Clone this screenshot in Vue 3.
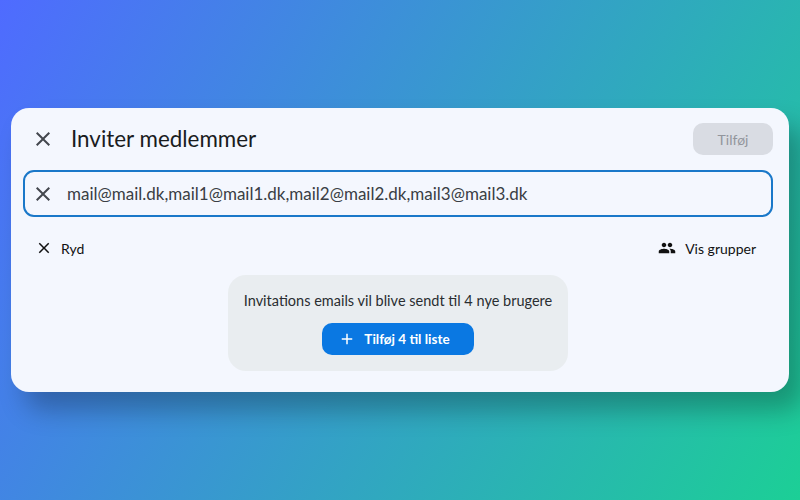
<template>
  <div class="page">
    <div class="dialog">
      <!-- header -->
      <div class="header">
        <button class="icon-btn">
          <svg width="24" height="24" viewBox="0 0 24 24"><path :d="closePath" fill="#43474e" /></svg>
        </button>
        <h1 class="title">Inviter medlemmer</h1>
        <button class="save" disabled>Tilføj</button>
      </div>

      <!-- input -->
      <div class="field">
        <svg width="24" height="24" viewBox="0 0 24 24"><path :d="closePath" fill="#43474e" /></svg>
        <span class="field-text">{{ emails }}</span>
      </div>

      <!-- actions -->
      <div class="actions">
        <button class="text-btn">
          <svg width="18" height="18" viewBox="0 0 24 24"><path :d="closePath" fill="#111" /></svg>
          <span>Ryd</span>
        </button>
        <button class="text-btn groups">
          <svg width="18" height="18" viewBox="0 0 24 24"><path :d="groupPath" fill="#111" /></svg>
          <span>Vis grupper</span>
        </button>
      </div>

      <!-- notice -->
      <div class="notice">
        <p>Invitations emails vil blive sendt til 4 nye brugere</p>
        <button class="add">
          <svg width="18" height="18" viewBox="0 0 24 24"><path d="M19 13h-6v6h-2v-6H5v-2h6V5h2v6h6v2z" fill="#fff" /></svg>
          <span>Tilføj 4 til liste</span>
        </button>
      </div>
    </div>
  </div>
</template>

<script setup>
const emails = 'mail@mail.dk,mail1@mail1.dk,mail2@mail2.dk,mail3@mail3.dk'
const closePath = 'M19 6.41 17.59 5 12 10.59 6.41 5 5 6.41 10.59 12 5 17.59 6.41 19 12 13.41 17.59 19 19 17.59 13.41 12z'
const groupPath = 'M16 11c1.66 0 2.99-1.34 2.99-3S17.66 5 16 5s-3 1.34-3 3 1.34 3 3 3zm-8 0c1.66 0 2.99-1.34 2.99-3S9.66 5 8 5 5 6.34 5 8s1.34 3 3 3zm0 2c-2.33 0-7 1.17-7 3.5V19h14v-2.5c0-2.33-4.67-3.5-7-3.5zm8 0c-.29 0-.62.02-.97.05 1.16.84 1.97 1.97 1.97 3.45V19h6v-2.5c0-2.33-4.67-3.5-7-3.5z'
</script>

<style>
html, body {
  margin: 0;
}
</style>

<style scoped>
.page {
  width: 800px;
  height: 500px;
  box-sizing: border-box;
  padding: 108px 11px 0;
  overflow: hidden;
  background: linear-gradient(120deg, #4f6bff 0%, #1ccf96 100%);
  font-family: "Lato", "Noto Sans", sans-serif;
}

.dialog {
  height: 284px;
  box-sizing: border-box;
  padding: 15px 16px 0 12px;
  background: #f4f7fe;
  border-radius: 18px;
  box-shadow: 14px 18px 26px rgba(0, 0, 0, 0.26);
}

button {
  font-family: inherit;
  border: none;
  background: none;
  padding: 0;
}

.header {
  display: flex;
  align-items: center;
  height: 32px;
}

.icon-btn {
  display: flex;
  width: 24px;
  height: 24px;
  margin-left: 8px;
}

.title {
  flex: 1;
  margin: 0 0 2px 16px;
  font-size: 22.4px;
  font-weight: 400;
  color: #1a1c1e;
}

.save {
  width: 80px;
  height: 32px;
  border-radius: 10px;
  background: #d9dce3;
  color: #92959c;
  font-size: 14px;
}

.field {
  display: flex;
  align-items: center;
  gap: 12px;
  height: 47px;
  box-sizing: border-box;
  margin-top: 15px;
  padding-left: 6px;
  border: 2px solid #1a78c9;
  border-radius: 11px;
}

.field-text {
  font-size: 17px;
  color: #3a3e44;
  white-space: nowrap;
}

.actions {
  display: flex;
  justify-content: space-between;
  align-items: center;
  margin-top: 20px;
  height: 22px;
}

.text-btn {
  display: flex;
  align-items: center;
  gap: 8px;
  margin-left: 12px;
  font-size: 14px;
  color: #111;
}

.groups {
  gap: 9px;
  margin: 0 17px 0 0;
}

.notice {
  width: 340px;
  height: 96px;
  box-sizing: border-box;
  margin: 16px auto 0;
  padding-top: 17px;
  background: #e9edf0;
  border-radius: 18px;
  text-align: center;
}

.notice p {
  margin: 0;
  font-size: 14.5px;
  line-height: 18px;
  color: #2a2d31;
}

.add {
  display: inline-flex;
  align-items: center;
  justify-content: center;
  gap: 8px;
  width: 152px;
  height: 32px;
  margin-top: 13px;
  padding: 0 8px 1px 0;
  border-radius: 10px;
  background: #0a78e2;
  color: #fff;
  font-size: 13.5px;
  font-weight: 700;
}
</style>
